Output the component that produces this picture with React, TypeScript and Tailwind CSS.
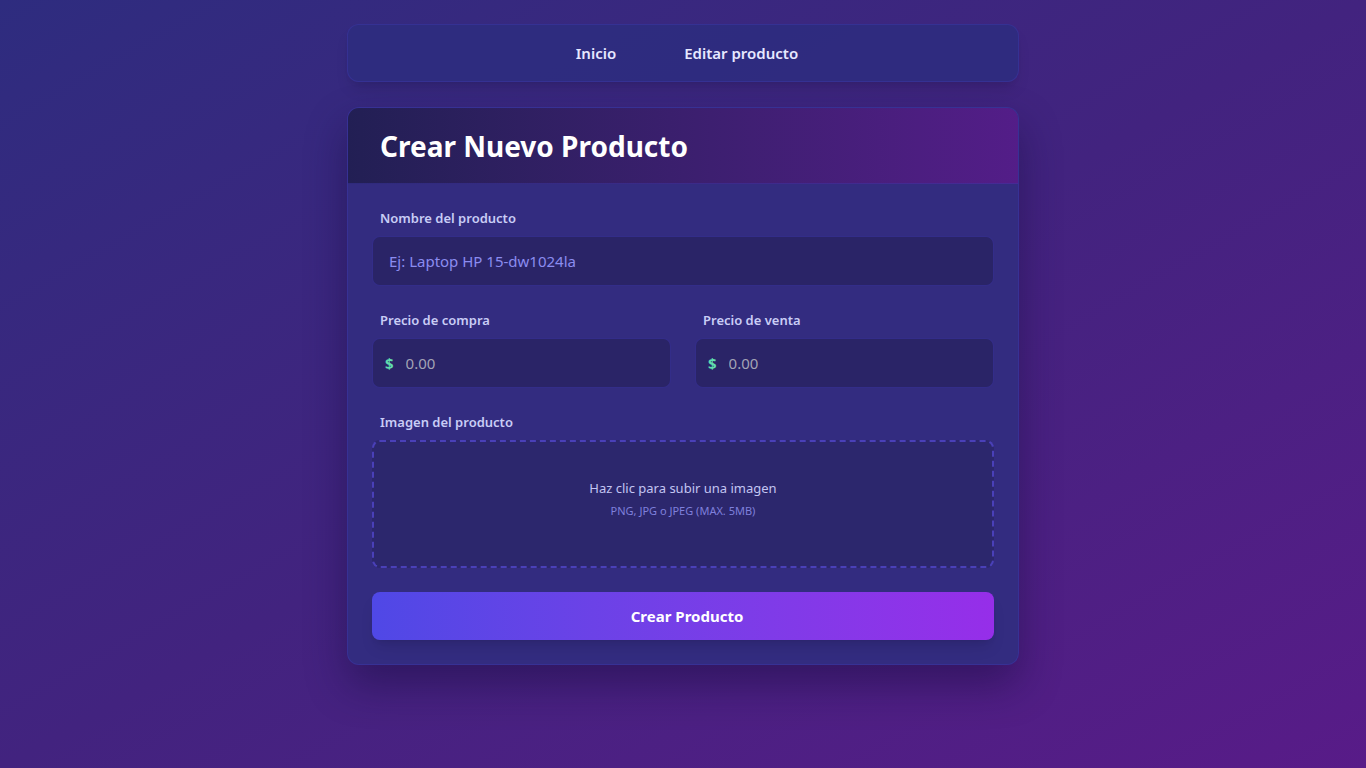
export default function App() {
  return (
    <div
      className="min-h-screen w-full bg-gradient-to-br from-[#2e2c7f] via-[#42237f] to-[#581b88] px-4 pt-6 pb-10"
      style={{ fontFamily: '"Noto Sans", "Open Sans", sans-serif' }}
    >
      <div className="mx-auto w-[672px]">
        <nav className="flex h-[58px] items-center justify-center gap-[68px] rounded-xl border border-[#3a36a0]/60 bg-[#2e2c80]/90 pl-2 shadow-lg">
          <a className="text-[15px] font-semibold text-[#e6e8ff]">Inicio</a>
          <a className="text-[15px] font-semibold text-[#e6e8ff]">Editar producto</a>
        </nav>

        <div className="mt-[25px] overflow-hidden rounded-xl border border-[#3b36a3]/60 bg-[#332c80] shadow-[0_20px_40px_rgba(20,10,60,0.45)]">
          <div className="border-b border-[#3b36a3]/50 bg-gradient-to-r from-[#221f54] via-[#3b1f6e] to-[#531d88] px-8 pt-[21px] pb-[19px]">
            <h1 className="text-[28px] font-bold leading-[35px] text-white">Crear Nuevo Producto</h1>
          </div>

          <form className="space-y-6 px-6 pt-6 pb-6">
            <div>
              <label className="mb-2 block px-2 text-[13px] font-semibold leading-5 text-[#c9cdf6]">
                Nombre del producto
              </label>
              <input
                type="text"
                placeholder="Ej: Laptop HP 15-dw1024la"
                className="h-[50px] w-full rounded-lg border border-[#3a34a0]/60 bg-[#2a2467] px-4 text-[15px] text-white outline-none placeholder:text-[#8b8cf0]"
              />
            </div>

            <div className="grid grid-cols-2 gap-6">
              {["Precio de compra", "Precio de venta"].map((label) => (
                <div key={label}>
                  <label className="mb-2 block px-2 text-[13px] font-semibold leading-5 text-[#c9cdf6]">
                    {label}
                  </label>
                  <div className="flex h-[50px] items-center gap-3 rounded-lg border border-[#3a34a0]/60 bg-[#2a2467] px-3">
                    <span className="text-[15px] font-bold text-[#5fdcae]">$</span>
                    <input
                      type="text"
                      placeholder="0.00"
                      className="w-full bg-transparent text-[15px] text-white outline-none placeholder:text-[#a3a3b5]"
                    />
                  </div>
                </div>
              ))}
            </div>

            <div>
              <label className="mb-2 block px-2 text-[13px] font-semibold leading-5 text-[#c9cdf6]">
                Imagen del producto
              </label>
              <div className="flex h-[128px] flex-col items-center justify-center rounded-lg border-2 border-dashed border-[#4a40b8] bg-[#2c276d] pb-[10px]">
                <p className="text-[13px] text-[#c3c5f2]">Haz clic para subir una imagen</p>
                <p className="mt-1 text-[11px] text-[#7f80dc]">PNG, JPG o JPEG (MAX. 5MB)</p>
              </div>
            </div>

            <button
              type="button"
              className="h-12 w-full rounded-lg bg-gradient-to-r from-[#4f48e6] to-[#962ee9] pl-2 text-[15px] font-bold text-white shadow-lg"
            >
              Crear Producto
            </button>
          </form>
        </div>
      </div>
    </div>
  );
}
